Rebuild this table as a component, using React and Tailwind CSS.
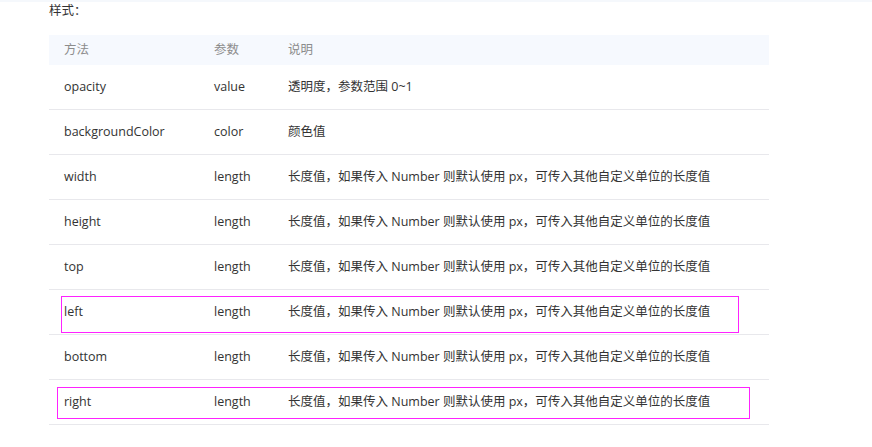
const rows = [
  { name: 'opacity', type: 'value', desc: '透明度，参数范围 0~1' },
  { name: 'backgroundColor', type: 'color', desc: '颜色值' },
  { name: 'width', type: 'length', desc: '长度值，如果传入 Number 则默认使用 px，可传入其他自定义单位的长度值' },
  { name: 'height', type: 'length', desc: '长度值，如果传入 Number 则默认使用 px，可传入其他自定义单位的长度值' },
  { name: 'top', type: 'length', desc: '长度值，如果传入 Number 则默认使用 px，可传入其他自定义单位的长度值' },
  { name: 'left', type: 'length', desc: '长度值，如果传入 Number 则默认使用 px，可传入其他自定义单位的长度值', mark: 'a' },
  { name: 'bottom', type: 'length', desc: '长度值，如果传入 Number 则默认使用 px，可传入其他自定义单位的长度值' },
  { name: 'right', type: 'length', desc: '长度值，如果传入 Number 则默认使用 px，可传入其他自定义单位的长度值', mark: 'b' },
]

export default function App() {
  return (
    <div className="min-h-screen bg-white text-[12.5px] text-[#333] font-['Open_Sans','Noto_Sans_CJK_SC',sans-serif]">
      <div className="h-[2px] bg-[#f5f8fc]" />
      <div className="pl-[49px]">
        <p className="h-[33px] leading-[17px]">样式：</p>

        <div className="w-[720px]">
          {/* Header */}
          <div className="flex h-[30px] items-center bg-[#f6f9fe] text-[#8c8c8c]">
            <div className="w-[165px] pl-[15px]">方法</div>
            <div className="w-[74px]">参数</div>
            <div className="flex-1">说明</div>
          </div>

          {rows.map((row) => (
            <div key={row.name} className="relative flex h-[45px] items-center pt-[1px] border-b border-[#e8e8ec]">
              <div className="w-[165px] pl-[15px]">{row.name}</div>
              <div className="w-[74px]">{row.type}</div>
              <div className="flex-1">{row.desc}</div>
              {row.mark === 'a' && (
                <span className="absolute left-[12px] top-[6px] h-[37px] w-[678px] border border-[#ff22ff]" />
              )}
              {row.mark === 'b' && (
                <span className="absolute left-[8px] top-[7px] h-[32px] w-[693px] border border-[#ff22ff]" />
              )}
            </div>
          ))}
        </div>
      </div>
    </div>
  )
}
